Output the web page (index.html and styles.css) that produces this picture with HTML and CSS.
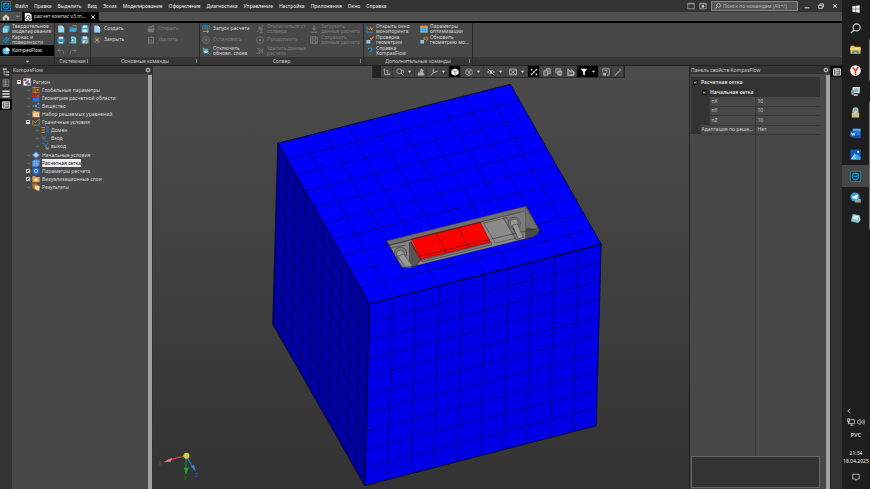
FILE: index.html
```html
<!DOCTYPE html>
<html lang="ru">
<head>
<meta charset="utf-8">
<title>KompasFlow</title>
<link rel="stylesheet" href="styles.css">
</head>
<body>
<svg class="sprite" aria-hidden="true">
  <defs>
    <path id="grid" d="M0 0H10M0 1H10M0 2H10M0 3H10M0 4H10M0 5H10M0 6H10M0 7H10M0 8H10M0 9H10M0 10H10M0 0V10M1 0V10M2 0V10M3 0V10M4 0V10M5 0V10M6 0V10M7 0V10M8 0V10M9 0V10M10 0V10" vector-effect="non-scaling-stroke"/>
    <symbol id="kompas" viewBox="0 0 12 12"><rect x=".5" y=".5" width="11" height="11" fill="#0b3346" stroke="#1e7fae"/><circle cx="6" cy="6" r="3.6" fill="none" stroke="#2a9bd0"/><path d="M2 3h8M3.500 6h5M4 8.500q2 1.500 4 0M4.500 4v2M7.500 4v2" fill="none" stroke="#2a9bd0" stroke-width=".9"/></symbol>
    <symbol id="home" viewBox="0 0 10 10"><path d="M1 5.300 5 1.500l4 3.800v3.700H6.200V6H4v3H1z" fill="#cfcfcf"/></symbol>
    <symbol id="down" viewBox="0 0 10 10"><path d="M1.500 3.500h7L5 7.500z" fill="currentColor"/></symbol>
    <symbol id="part" viewBox="0 0 10 10"><path d="M1 0h6l2.500 2.500V10H1z" fill="#f4f4f4"/><path d="M7.500 4A3 3 0 1 0 8 7.500L5.500 6z" fill="none" stroke="#222" stroke-width="1.100"/></symbol>
    <symbol id="solid" viewBox="0 0 10 10"><path d="M1 4 3.500 1H9.500V6.500L7 9.500H1z" fill="#3c9fce"/><path d="M1 4h6v5.500H1z" fill="#8fd0ee"/><path d="M1 4 3.500 1H9.500L7 4z" fill="#61b8df"/></symbol>
    <symbol id="surf" viewBox="0 0 10 10"><path d="M.5 6 6 .8l3.700 3L5 9.500z" fill="#2484bb"/><path d="M3 4l4 3.500M2 7.500 8 2.500" stroke="#0e486b" stroke-width=".8"/></symbol>
    <symbol id="flow" viewBox="0 0 10 10"><circle cx="5" cy="5" r="4.500" fill="#4fb0dd"/><path d="M5 .5A4.500 4.500 0 0 1 9.500 5L5 5z" fill="#e6f6ff"/><path d="M2 2.500Q4 6 8 8" stroke="#bce6fb" fill="none"/></symbol>
    <symbol id="new" viewBox="0 0 10 10"><path d="M1.500 .5H6L9 3.500V9.500H1.500z" fill="#9bd6ef"/><path d="M6 .5V3.500H9z" fill="#e6f6ff"/></symbol>
    <symbol id="open" viewBox="0 0 10 10"><path d="M.5 2H4L5 3H9.500V8.500H.5z" fill="#2384ba"/><path d="M4 .8h5v1.500" fill="none" stroke="#e48a29"/><path d="M2 4.500H10L8.500 8.500H.5z" fill="#3ba4d8"/></symbol>
    <symbol id="save" viewBox="0 0 10 10"><path d="M.5 .5H8L9.500 2V9.500H.5z" fill="#3ba4d8"/><path d="M2.500 .5H7.500V3.500H2.500zM2 5.500H8V9H2z" fill="#d3eef9"/></symbol>
    <symbol id="print" viewBox="0 0 10 10"><path d="M2 .8H8V4H2zM2 7H8V9.500H2z" fill="#d3eef9"/><path d="M.5 3.500H9.500V7.500H.5z" fill="#2b92c8"/></symbol>
    <symbol id="preview" viewBox="0 0 10 10"><path d="M2.500 .5H7L9 2.500V9.500H2.500z" fill="#71c4e8"/><circle cx="4.500" cy="5.500" r="2" fill="#e6f6ff" stroke="#17628d"/><path d="M3 7 .8 9.300" stroke="#3ba4d8" stroke-width="1.300"/></symbol>
    <symbol id="saveas" viewBox="0 0 10 10"><use href="#save"/><path d="M4.500 9 9 4.500" stroke="#e48a29" stroke-width="1.800"/></symbol>
    <symbol id="undo" viewBox="0 0 10 10"><path d="M3.800 2 1 4.500 3.800 7M1 4.500H7Q9 5 8 8.500" fill="none" stroke="#777"/></symbol>
    <symbol id="redo" viewBox="0 0 10 10"><path d="M6.200 2 9 4.500 6.200 7M9 4.500H3Q1 5 2 8.500" fill="none" stroke="#777"/></symbol>
    <symbol id="close" viewBox="0 0 10 10"><circle cx="5" cy="5" r="4.200" fill="none" stroke="#3585ad" stroke-width=".8"/><path d="M3 3l4 4M7 3 3 7" stroke="#f0902c" stroke-width="1.500"/></symbol>
    <symbol id="folderg" viewBox="0 0 10 10"><path d="M.5 4.500H9.500L8.500 9H1.500zM2 4V2H7" fill="#777"/><path d="M4 3.500 8 .8M6 .8H8V3" fill="none" stroke="#888"/></symbol>
    <symbol id="trash" viewBox="0 0 10 10"><path d="M1 2H9M4 1H6M2 3V9H8V3M4 4V8M6 4V8" fill="none" stroke="#787878" stroke-width="1.200"/></symbol>
    <symbol id="run" viewBox="0 0 10 10"><path d="M.5 1H5V5H.5zM5 1H9.500V5H5zM2.500 1V5M7 1V5" fill="none" stroke="#2d8dc4" stroke-width=".9"/><path d="M1 8H8M6 6l2.500 2L6 9.800" fill="none" stroke="#e48a29" stroke-width="1.200"/></symbol>
    <symbol id="pause" viewBox="0 0 10 10"><circle cx="5" cy="5" r="4.300" fill="none" stroke="#7b7b7b" stroke-width=".9"/><path d="M4 3V7M6 3V7" stroke="#888"/></symbol>
    <symbol id="play" viewBox="0 0 10 10"><circle cx="5" cy="5" r="4.300" fill="none" stroke="#7b7b7b" stroke-width=".9"/><path d="M4 3v4l3-2z" fill="#888"/></symbol>
    <symbol id="layers" viewBox="0 0 10 10"><path d="M.5 2H8V8H2z" fill="#3398cf"/><path d="M2 6q3-4 6 0-3 3-6 0" fill="#d3eef9"/><path d="M1 1l8.500 8.500" stroke="#e48a29"/></symbol>
    <symbol id="plug" viewBox="0 0 10 10"><path d="M.5 9 3 6.500M3 4 6 7 8.500 5.500 5 2zM6 3 9 .5M4 9H9" stroke="#808080" fill="#6d6d6d"/></symbol>
    <symbol id="wipe" viewBox="0 0 10 10"><path d="M1 2H4V8H1M9 2 4 8M5 2 9 8M6 5H9" fill="none" stroke="#7b7b7b"/></symbol>
    <symbol id="load" viewBox="0 0 10 10"><path d="M5 .5V6M2.500 4 5 6.500 7.500 4M1 9H9" fill="none" stroke="#808080" stroke-width="1.200"/></symbol>
    <symbol id="store" viewBox="0 0 10 10"><path d="M1 1H8L9 2V9H1zM3 1V4H7V1M3 9V6H7V9" fill="none" stroke="#858585"/></symbol>
    <symbol id="chart" viewBox="0 0 10 10"><path d="M1 1V9H9" fill="none" stroke="#2d8dc4" stroke-width="1.200"/><path d="M2 4 4 6 6 3 7 6 9 3" fill="none" stroke="#e48a29" stroke-width="1.200"/></symbol>
    <symbol id="check" viewBox="0 0 10 10"><path d="M.5 5H5.500V9.500H.5z" fill="#7ecbea"/><path d="M5 2.500 6.500 4.500 9.500 .8" fill="none" stroke="#e48a29" stroke-width="1.300"/></symbol>
    <symbol id="help" viewBox="0 0 10 10"><path d="M3 3Q3 1 5 1T7.500 3Q7.500 4.500 5 5.500V7M5 8.300V9.800" fill="none" stroke="#2d93cb" stroke-width="1.400"/></symbol>
    <symbol id="table" viewBox="0 0 10 10"><path d="M.5 1H9.500V9.500H.5z" fill="#9bd6ef"/><path d="M.5 1H9.500V3H.5z" fill="#e48a29"/><path d="M.5 5H9.500M.5 7.200H9.500M3.500 3V9.500M6.500 3V9.500" stroke="#1f7eb2" stroke-width=".8"/></symbol>
    <symbol id="refresh" viewBox="0 0 10 10"><path d="M.5 5H5V9.500H.5z" fill="#7ecbea"/><path d="M4 3 6 1.500V5zM7 1Q9 2.500 7 5M8.500 .5Q10.500 3 8.500 6" fill="none" stroke="#d9812c"/></symbol>
    <symbol id="gear" viewBox="0 0 10 10"><circle cx="5" cy="5" r="2.700" fill="none" stroke="#ddd" stroke-width="1.400"/><path d="M5 .8V2M5 8V9.200M.8 5H2M8 5H9.200M2 2l.8.8M8 2l-.8.8M2 8l.8-.8M8 8l-.8-.8" stroke="#ddd" stroke-width="1.200"/></symbol>
    <symbol id="tree" viewBox="0 0 10 10"><path d="M1 1H5M2.500 2V8.500H5M2.500 5H5" fill="none" stroke="#aaa"/><path d="M5 4H9V6H5zM5 7.500H9V9.500H5zM1 .5H6V2.500H1z" fill="#aaa"/></symbol>
    <symbol id="sheet" viewBox="0 0 10 10"><path d="M1.500 1H8.500V9H1.500zM3 3H7M3 5H7M3 7H7M4 1V9" fill="none" stroke="#999"/></symbol>
    <symbol id="lines" viewBox="0 0 10 10"><path d="M.5 1.500H9.500M.5 5H9.500M.5 8.500H9.500" stroke="#ddd" stroke-width="1.900"/></symbol>
    <symbol id="panel" viewBox="0 0 10 10"><path d="M.7 1H9.300V9H.7z" fill="#555" stroke="#eee" stroke-width="1.100"/><path d="M3.500 1V9M4 3.500H8M4 6H8" stroke="#eee" stroke-width="1.100"/></symbol>
    <symbol id="region" viewBox="0 0 10 10"><path d="M.5 .5H9.500V9.500H.5z" fill="#f4f4ff"/><path d="M1 1H4.500V4H1zM5.500 6H9V9H5.500z" fill="#e44"/><path d="M2 6.500 7 2V9z" fill="#347ad8"/></symbol>
    <symbol id="params" viewBox="0 0 10 10"><path d="M.5 2H9.500M.5 5H9.500M.5 8H9.500M3 .8V3.200M7 3.800V6.200M4 6.800V9.200" stroke="#d8872d" stroke-width="1.100"/></symbol>
    <symbol id="geom" viewBox="0 0 10 10"><path d="M1 5H9V9.500H1z" fill="#1679f0"/><path d="M1 .5H5.500V4.500H1z" fill="#e31818"/><circle cx="7.500" cy="2.800" r="1.800" fill="#db3a3a"/></symbol>
    <symbol id="matter" viewBox="0 0 10 10"><path d="M5 5 8 2M5 5 1 5M5 5 8 8" stroke="#3f82c0"/><g fill="#4aa2df"><circle cx="5" cy="5" r="1.500"/><circle cx="8" cy="2" r="1.200"/><circle cx="1.500" cy="5" r="1"/><circle cx="5" cy="9" r="1"/><circle cx="8.500" cy="6.500" r="1"/></g></symbol>
    <symbol id="eq" viewBox="0 0 10 10"><path d="M.5 1H4L5 2H9.500V9H.5z" fill="#eea453"/><path d="M2 4H8.500V8H2z" fill="#fff"/><path d="M3 6H8M4 4.500V7.500M7 4.500V7.500" stroke="#e3964a"/></symbol>
    <symbol id="bound" viewBox="0 0 10 10"><path d="M1 9V3L4 6 9 1V9z" fill="none" stroke="#d8872d"/><path d="M1 9.300H9M9.200 1V9" stroke="#3574c4"/></symbol>
    <symbol id="domain" viewBox="0 0 10 10"><path d="M.5 2H5M.5 5H5M.5 8H5" stroke="#e08a2a" stroke-width="1.300"/><path d="M7 .5V9.500M9 .5V9.500M6 2H10M6 5H10M6 8H10" stroke="#2f6bc0"/></symbol>
    <symbol id="inlet" viewBox="0 0 10 10"><path d="M1 1 5 9H9.500M3 4.500 8 2" fill="none" stroke="#3574c4" stroke-width="1.100"/><path d="M1 5 6 6" stroke="#a26a30"/></symbol>
    <symbol id="outlet" viewBox="0 0 10 10"><path d="M1 1Q7 2 6 9M9 1 6 5" fill="none" stroke="#3574c4" stroke-width="1.200"/><path d="M6 6 9 9M9 6V9H6" fill="none" stroke="#e08a2a"/></symbol>
    <symbol id="initial" viewBox="0 0 10 10"><path d="M5 1 9.500 5 5 9 .5 5z" fill="#a9cdf5" stroke="#3c7ed5"/></symbol>
    <symbol id="mesh" viewBox="0 0 10 10"><path d="M.5 3 3 .5H9.500V7L7 9.500H.5z" fill="#3d83e4"/><path d="M.5 5.500H9M3 1V9.500M6 1V9.500M.5 8H9M.5 3H9.500" stroke="#9cc5fa" stroke-width=".7"/></symbol>
    <symbol id="calc" viewBox="0 0 10 10"><path d="M5 0 7 1.500 9.500 2 9 5 9.500 8 7 8.500 5 10 3 8.500 .5 8 1 5 .5 2 3 1.500z" fill="#1c71e6"/><circle cx="5" cy="5" r="2" fill="none" stroke="#c6defc"/></symbol>
    <symbol id="visual" viewBox="0 0 10 10"><path d="M.5 1.500H4L5 2.500H9.500V9H.5z" fill="#eda65b"/><path d="M2 8 4 4H8L6 8z" fill="#fff2dd" stroke="#c57f31" stroke-width=".6"/></symbol>
    <symbol id="result" viewBox="0 0 10 10"><path d="M.5 .5H6V6.500H.5zM2 2H8V8H2z" fill="#b87333"/><path d="M3.500 3.500H9.500V9.500H6L3.500 7z" fill="#f5d2a0"/></symbol>
    <symbol id="axes" viewBox="0 0 10 10"><path d="M2 1V8H9M2 1 .8 3M9 8 7 6.800M4 3H6V8" fill="none" stroke="#bbb"/></symbol>
    <symbol id="lens" viewBox="0 0 10 10"><circle cx="4" cy="4" r="3" fill="none" stroke="#aaa"/><path d="M6 6 9.500 9.500M6 3H9.500V6" stroke="#aaa" fill="none"/></symbol>
    <symbol id="orient" viewBox="0 0 10 10"><path d="M1 9H9L8 6H2zM4 6 5 1 8 3 6 6" fill="#aaa" stroke="#ccc" stroke-width=".6"/></symbol>
    <symbol id="triad" viewBox="0 0 10 10"><path d="M4 .8V6L1 9.500M4 6 9.500 4" fill="none" stroke="#bbb" stroke-width="1.200"/></symbol>
    <symbol id="cube" viewBox="0 0 10 10"><path d="M5 .5 9.500 2.500V7.500L5 9.800 .5 7.500V2.500z" fill="#f5f5f5"/><path d="M.8 2.700 5 4.700 9.200 2.700M5 4.700V9.500" stroke="#444" stroke-width=".6" fill="none"/></symbol>
    <symbol id="wire" viewBox="0 0 10 10"><path d="M5 .8 9 2.800V7.500L5 9.500 1 7.500V2.800zM1 2.800 5 5 9 2.800M5 5V9.500M3 1.800 7 8.500M7 1.800 3 8.500" fill="none" stroke="#aaa" stroke-width=".8"/></symbol>
    <symbol id="eye" viewBox="0 0 10 10"><path d="M.5 5Q5 .8 9.500 5 5 9.200 .5 5" fill="none" stroke="#aaa"/><circle cx="5" cy="5" r="1.400" fill="#ccc"/><path d="M1 1l8 8" stroke="#ccc"/></symbol>
    <symbol id="crop" viewBox="0 0 10 10"><path d="M.8 1.500H9.200V8.500H.8zM1 2l8 6.500M9 2 1 8.500" fill="none" stroke="#bbb"/></symbol>
    <symbol id="dots" viewBox="0 0 10 10"><path d="M2.500 7.500 7.500 2.500" stroke="#eee"/><path d="M1 1H3V3H1zM7 1H9V3H7zM1 7H3V9H1zM7 7H9V9H7zM4 4H6V6H4z" fill="#eee"/></symbol>
    <symbol id="box" viewBox="0 0 10 10"><path d="M1 3.500H6V9H1zM4 3.500V1H9V7H6" fill="#666" stroke="#bbb"/></symbol>
    <symbol id="stack" viewBox="0 0 10 10"><path d="M1 1H7V6H1z" fill="#666" stroke="#bbb" stroke-width=".8"/><path d="M3.500 4.500Q6 3 8.500 4.500V8.500Q6 10 3.500 8.500z" fill="#999" stroke="#ccc" stroke-width=".8"/><path d="M3.500 6.500H8.500" stroke="#444" stroke-width=".7"/></symbol>
    <symbol id="bag" viewBox="0 0 10 10"><path d="M1 9.500V1L4 4 6 2 8 5V9.500zM3 8H9V5H3" fill="#777" stroke="#bbb"/></symbol>
    <symbol id="list" viewBox="0 0 10 10"><path d="M1 1H9V9H6M1 1V5M3 3H7M5 5H7" fill="none" stroke="#aaa" stroke-width="1.100"/><path d="M1 6H5V9.500H1z" fill="#aaa"/></symbol>
    <symbol id="filter" viewBox="0 0 10 10"><path d="M.8 1H9.200L6 5V9.500L4 8.500V5z" fill="#fff"/></symbol>
    <symbol id="pick" viewBox="0 0 10 10"><path d="M1 9.500 7 3.500" stroke="#999" stroke-width="1.500"/><path d="M6 2 8 .8 9.500 2.500 8 4.500z" fill="#888"/></symbol>
    <symbol id="search" viewBox="0 0 10 10"><circle cx="6" cy="4" r="3.200" fill="none" stroke="currentColor" stroke-width="1.100"/><path d="M3.700 6.300.8 9.200" stroke="currentColor" stroke-width="1.200"/></symbol>
    <symbol id="win" viewBox="0 0 10 10"><path d="M.5 1.500 4.500 1V4.700H.5zM5.200 .9 9.500 .3V4.700H5.200zM.5 5.400H4.500V9L.5 8.500zM5.200 5.400H9.500V9.700L5.200 9.100z" fill="#fff"/></symbol>
    <symbol id="explorer" viewBox="0 0 12 12"><path d="M.5 2H4.500L5.500 3H11.500V10.500H.5z" fill="#f3b83a"/><path d="M.5 4H11.500V7H.5z" fill="#ffda6a"/><path d="M2.500 10.500V7H9.500V10.500H7.500V8.800H4.500V10.500z" fill="#2c93df"/></symbol>
    <symbol id="yandex" viewBox="0 0 12 12"><circle cx="6" cy="6" r="5.800" fill="#fff"/><path d="M3 2.500 6 6.500 9 2.500M6 6.500V11" fill="none" stroke="#ee3224" stroke-width="1.800"/></symbol>
    <symbol id="monitor" viewBox="0 0 12 12"><path d="M3 1H11L10.500 8H2z" fill="#d8e2e8"/><path d="M4.500 2.500H9.500L9 6.500H4z" fill="#9cc2d5"/><path d="M1 5 4 4 5 9 2 10z" fill="#8f989c"/><path d="M4 9H9L8 11H4z" fill="#b9c0c4"/><path d="M5 5 7 4 8 5.500" fill="none" stroke="#4a94b4"/></symbol>
    <symbol id="lock" viewBox="0 0 12 12"><path d="M3.500 6V3Q4 1 6 1T8.500 3V6" fill="#8ea9b5" stroke="#b6cbd6" stroke-width="1.500"/><path d="M2 6H10V11.500H2z" fill="#d8bb72"/><path d="M4 5 7 4 8 8 5 9z" fill="#acd0df"/></symbol>
    <symbol id="word" viewBox="0 0 12 12"><path d="M3 .8H11.500V11H3z" fill="#2a79d1"/><path d="M3 .8H11.500V3.500H3z" fill="#50a9ec"/><path d="M3 8H11.500V11H3z" fill="#174fa5"/><path d="M0 3.500H7V9.500H0z" fill="#185abd"/><path d="M1.500 5 2.500 8 3.500 5.500 4.500 8 5.500 5" fill="none" stroke="#fff" stroke-width=".9"/></symbol>
    <symbol id="photos" viewBox="0 0 12 12"><path d="M.5 .5H11.500V11.500H.5z" fill="#0f5db8"/><path d="M.5 11.500 5 5 11.500 11.500z" fill="#8bd2ff"/><path d="M5 8.500 8 5.500 11.500 9V11.500H8z" fill="#3ba0ed"/><path d="M8 2H10V4H8z" fill="#fff"/></symbol>
    <symbol id="tg" viewBox="0 0 12 12"><circle cx="5.500" cy="5.500" r="5" fill="#2fa4df"/><path d="M2 5.500 9 2.500 7.500 8.500 5 6.500 4.500 8z" fill="#fff"/><path d="M5.500 7.500H11.800V11.500H5.500z" fill="#9aa1a6"/></symbol>
    <symbol id="note" viewBox="0 0 12 12"><path d="M3 1 10.500 2.500 8.500 11 1 9z" fill="#83c8d6"/><path d="M4 2.500 9.500 3.500 8.500 7 3 6z" fill="#d9f1f5"/><path d="M8.500 11 10.500 2.500 11.300 8z" fill="#dfe9e9"/></symbol>
    <symbol id="net" viewBox="0 0 10 10"><path d="M2.500 2H9.500V7H2.500zM4 9H8M6 7V9M.5 1V4.500H3V1zM1.800 4.500V8" fill="none" stroke="#ddd" stroke-width=".9"/></symbol>
    <symbol id="sound" viewBox="0 0 10 10"><path d="M.5 3.500H2L4 1.500V8.500L2 6.500H.5zM5.500 3.500Q6.800 5 5.500 6.500M7 2.500Q9 5 7 7.500M8.500 1.500Q11 5 8.500 8.500" fill="none" stroke="#ddd" stroke-width=".8"/></symbol>
    <symbol id="bubble" viewBox="0 0 10 10"><path d="M1 1.500H9V7.500H6.500L5 9.200 4.500 7.500H1z" fill="none" stroke="#ddd" stroke-width=".9"/></symbol>
    <symbol id="frame" viewBox="0 0 10 10"><path d="M1 1.500H9V8.500H1z" fill="none" stroke="#aaa"/><path d="M1 2.500H9" stroke="#aaa" stroke-width=".8"/></symbol>
    <symbol id="frameg" viewBox="0 0 10 10"><use href="#frame"/><circle cx="5" cy="5.500" r="1.700" fill="#ccc"/></symbol>
    <symbol id="min" viewBox="0 0 10 10"><path d="M1 8H9" stroke="#eee" stroke-width="1.500"/></symbol>
    <symbol id="restore" viewBox="0 0 10 10"><path d="M1 4H7V9H1zM3 3V1.500H9V7H8" fill="none" stroke="#eee" stroke-width="1.300"/></symbol>
    <symbol id="x" viewBox="0 0 10 10"><path d="M2 2l6 6M8 2 2 8" stroke="#eee" stroke-width="1.500"/></symbol>
  </defs>
</svg>

<div class="screen">
  <main class="app">
    <header class="menubar">
      <svg class="logo"><use href="#kompas"/></svg>
      <nav class="menu">
        <button>Файл</button><button>Правка</button><button>Выделить</button><button>Вид</button><button>Эскиз</button><button>Моделирование</button><button>Оформление</button><button>Диагностика</button><button>Управление</button><button>Настройка</button><button>Приложения</button><button>Окно</button><button>Справка</button>
      </nav>
      <div class="window-tools">
        <button aria-label="Экран"><svg class="icon"><use href="#frame"/></svg></button>
        <button aria-label="Вид окна"><svg class="icon"><use href="#frameg"/></svg></button>
        <label class="search"><svg class="icon small"><use href="#search"/></svg><input type="text" placeholder="Поиск по командам (Alt+/)" aria-label="Поиск по командам"></label>
      </div>
      <div class="window-buttons">
        <button aria-label="Свернуть"><svg class="icon small"><use href="#min"/></svg></button>
        <button aria-label="Восстановить"><svg class="icon small"><use href="#restore"/></svg></button>
        <button aria-label="Закрыть окно"><svg class="icon small"><use href="#x"/></svg></button>
      </div>
    </header>

    <div class="tabs">
      <button class="home" aria-label="Главная"><svg class="icon"><use href="#home"/></svg></button>
      <button class="home-menu" aria-label="Список"><svg class="icon tiny"><use href="#down"/></svg></button>
      <button class="tab"><svg class="icon"><use href="#part"/></svg><span>расчет компас v3.m...</span><svg class="icon small"><use href="#x"/></svg></button>
    </div>

    <section class="ribbon">
      <div class="group modes">
        <div class="mode-list">
          <button class="cmd"><svg class="icon"><use href="#solid"/></svg><span>Твердотельное<br>моделирование</span></button>
          <button class="cmd"><svg class="icon"><use href="#surf"/></svg><span>Каркас и<br>поверхности</span></button>
          <button class="cmd active"><svg class="icon"><use href="#flow"/></svg><span>KompasFlow</span></button>
        </div>
        <div class="caption"><svg class="icon tiny"><use href="#down"/></svg></div>
      </div>
      <div class="group system">
        <div class="icon-grid">
          <button aria-label="Создать документ"><svg class="icon"><use href="#new"/></svg></button><button aria-label="Открыть документ"><svg class="icon"><use href="#open"/></svg></button><button aria-label="Сохранить"><svg class="icon"><use href="#save"/></svg></button>
          <button aria-label="Печать"><svg class="icon"><use href="#print"/></svg></button><button aria-label="Просмотр"><svg class="icon"><use href="#preview"/></svg></button><button aria-label="Сохранить как"><svg class="icon"><use href="#saveas"/></svg></button>
          <button aria-label="Отменить"><svg class="icon"><use href="#undo"/></svg></button><button aria-label="Повторить"><svg class="icon"><use href="#redo"/></svg></button>
        </div>
        <div class="caption grip">Системная</div>
      </div>
      <div class="group basic">
        <div class="commands">
          <button class="cmd"><svg class="icon"><use href="#new"/></svg><span>Создать</span></button>
          <button class="cmd off"><svg class="icon"><use href="#folderg"/></svg><span>Открыть</span></button>
          <button class="cmd"><svg class="icon"><use href="#close"/></svg><span>Закрыть</span></button>
          <button class="cmd off"><svg class="icon"><use href="#trash"/></svg><span>Удалить</span></button>
        </div>
        <div class="caption grip">Основные команды</div>
      </div>
      <div class="group solver">
        <div class="commands">
          <button class="cmd"><svg class="icon"><use href="#run"/></svg><span>Запуск расчета</span></button>
          <button class="cmd off"><svg class="icon"><use href="#plug"/></svg><span>Отключиться от<br>солвера</span></button>
          <button class="cmd off"><svg class="icon"><use href="#load"/></svg><span>Загрузить<br>данные расчета</span></button>
          <button class="cmd off"><svg class="icon"><use href="#pause"/></svg><span>Остановить</span></button>
          <button class="cmd off"><svg class="icon"><use href="#play"/></svg><span>Продолжить</span></button>
          <button class="cmd off"><svg class="icon"><use href="#store"/></svg><span>Сохранить<br>данные расчета</span></button>
          <button class="cmd"><svg class="icon"><use href="#layers"/></svg><span>Отключить<br>обновл. слоев</span></button>
          <button class="cmd off"><svg class="icon"><use href="#wipe"/></svg><span>Удалить данные<br>расчета</span></button>
        </div>
        <div class="caption grip">Солвер</div>
      </div>
      <div class="group extra">
        <div class="commands">
          <button class="cmd"><svg class="icon"><use href="#chart"/></svg><span>Открыть окно<br>мониторинга</span></button>
          <button class="cmd"><svg class="icon"><use href="#table"/></svg><span>Параметры<br>оптимизации</span></button>
          <button class="cmd"><svg class="icon"><use href="#check"/></svg><span>Проверка<br>геометрии</span></button>
          <button class="cmd"><svg class="icon"><use href="#refresh"/></svg><span>Обновить<br>геометрию мо...</span></button>
          <button class="cmd"><svg class="icon"><use href="#help"/></svg><span>Справка<br>KompasFlow</span></button>
        </div>
        <div class="caption grip">Дополнительные команды</div>
      </div>
      <div class="group rest"><div></div><div class="caption"></div></div>
    </section>

    <section class="workspace">
      <div class="strip left">
        <button aria-label="Дерево"><svg class="icon"><use href="#tree"/></svg></button>
        <button aria-label="Исполнения"><svg class="icon"><use href="#sheet"/></svg></button>
        <button aria-label="Слои"><svg class="icon"><use href="#lines"/></svg></button>
        <button class="active" aria-label="KompasFlow"><svg class="icon"><use href="#panel"/></svg></button>
      </div>
      <aside class="panel tree-panel">
        <h2 class="panel-title">KompasFlow<svg class="icon small"><use href="#gear"/></svg></h2>
        <div class="panel-body">
          <ul class="tree">
            <li><button class="node"><i class="box minus"></i><svg class="icon"><use href="#region"/></svg><span>Регион</span></button>
              <ul>
                <li><button class="node"><i class="box none"></i><svg class="icon"><use href="#params"/></svg><span>Глобальные параметры</span></button></li>
                <li><button class="node"><i class="box none"></i><svg class="icon"><use href="#geom"/></svg><span>Геометрия расчетной области</span></button></li>
                <li><button class="node"><i class="box none"></i><svg class="icon"><use href="#matter"/></svg><span>Вещество</span></button></li>
                <li><button class="node"><i class="box none"></i><svg class="icon"><use href="#eq"/></svg><span>Набор решаемых уравнений</span></button></li>
                <li><button class="node"><i class="box minus"></i><svg class="icon"><use href="#bound"/></svg><span>Граничные условия</span></button>
                  <ul>
                    <li><button class="node"><i class="box none"></i><svg class="icon"><use href="#domain"/></svg><span>Домен</span></button></li>
                    <li><button class="node"><i class="box none"></i><svg class="icon"><use href="#inlet"/></svg><span>Вход</span></button></li>
                    <li><button class="node"><i class="box none"></i><svg class="icon"><use href="#outlet"/></svg><span>выход</span></button></li>
                  </ul>
                </li>
                <li><button class="node"><i class="box none"></i><svg class="icon"><use href="#initial"/></svg><span>Начальные условия</span></button></li>
                <li><button class="node selected"><i class="box none"></i><svg class="icon"><use href="#mesh"/></svg><span>Расчетная сетка</span></button></li>
                <li><button class="node"><i class="box plus"></i><svg class="icon"><use href="#calc"/></svg><span>Параметры расчета</span></button></li>
                <li><button class="node"><i class="box plus"></i><svg class="icon"><use href="#visual"/></svg><span>Визуализационные слои</span></button></li>
                <li><button class="node"><i class="box none"></i><svg class="icon"><use href="#result"/></svg><span>Результаты</span></button></li>
              </ul>
            </li>
          </ul>
          <div class="scrollbar"></div>
        </div>
      </aside>

      <div class="viewport">
        <svg class="scene" viewBox="153 66 537 423" role="img" aria-label="Расчетная область">
          <g stroke="#000" stroke-width=".5">
            <path d="M278 143 511 84 602 244 370 304z" fill="#0000fe"/>
            <path d="M370 304 602 244 597 426 365 486z" fill="#0000e6"/>
            <path d="M278 143 370 304 365 486 273 324z" fill="#0000a0"/>
          </g>
          <g fill="none" stroke="#000040" stroke-width=".5">
            <use href="#grid" transform="matrix(23.3 -5.9 9.15 16.1 278 143)"/>
            <use href="#grid" transform="matrix(23.2 -6 -.5 18.2 370 304)"/>
            <use href="#grid" transform="matrix(9.2 16.1 -.5 18.15 278 143)"/>
          </g>
          <g stroke-width=".5" stroke="#333">
            <path d="M387 241 527 206 540 230 538 234 533 237 418 265 410 268 402 267z" fill="#838383"/>
            <path d="M387 241 527 206 528 211 412 239 405 242 390 245z" fill="#707070"/>
            <path d="M410 242 421 259 422 264 410 267z" fill="#555"/>
            <path d="M526 206 540 230 538 234 533 237 526 238z" fill="#6e6e6e"/>
            <path d="M527 228 540 230 538 234 533 237 526 238z" fill="#4c4c4c"/>
            <path d="M412 239 482 222 517 213 526 238 418 265 422 260z" fill="#8e8e8e" stroke="none"/>
            <path d="M507 216 526 209 526 238 520 239z" fill="#7c7c7c" stroke="none"/>
            <path d="M484 223 505 218 517 238 496 243z" fill="#8a8a8a"/>
            <path d="M504 218 507 217 520 239 517 240z" fill="#777"/>
            <path d="M422 260 492 242 492 245 423 262z" fill="#777"/>
            <path d="M412 239 481 222 491 242 422 259z" fill="#f00" stroke="#600"/>
            <path d="M411 240 422 259 422 262 411 243z" fill="#b00" stroke="none"/>
            <path d="M437 234 447 253M459 228 469 247M421 256 491 239M390 248 406 245M390 245 525 211M492 239 539 228M387 241 402 267" fill="none" stroke="#222"/>
            <circle cx="401" cy="253" r="6" fill="#797979"/><circle cx="401" cy="254" r="4" fill="#999"/>
            <path d="M398 256 404 254 413 266 406 267z" fill="#999"/>
            <circle cx="515" cy="223" r="6" fill="#777"/><circle cx="515" cy="223" r="4" fill="#999"/>
            <path d="M513 225 518 224 524 237 519 239z" fill="#999"/>
          </g>
          <g fill="none" stroke-width="1.200">
            <path d="M186 456 167 461" stroke="#c8474a"/><path d="M172 458 164 462 171 462z" fill="#f08080"/>
            <path d="M186 456V469" stroke="#15962b"/><path d="M184 468H189L186 475z" fill="#17a92f"/>
            <path d="M186 456 193 468" stroke="#287bbb"/><path d="M191 467 194 465 196 472z" fill="#3683eb"/>
            <circle cx="186.500" cy="456" r="3" fill="#d1ca45"/>
          </g>
          <text class="axis ax" x="158" y="465">X</text><text class="axis ay" x="184" y="480">Y</text><text class="axis az" x="195" y="477">Z</text>
        </svg>
        <div class="viewbar">
          <span class="handle"></span>
          <button aria-label="СК"><svg class="icon"><use href="#axes"/></svg></button>
          <button class="wide" aria-label="Масштаб"><svg class="icon"><use href="#lens"/></svg><svg class="icon tiny"><use href="#down"/></svg></button>
          <button aria-label="Ориентация"><svg class="icon"><use href="#orient"/></svg></button>
          <button class="wide" aria-label="Оси"><svg class="icon"><use href="#triad"/></svg><svg class="icon tiny"><use href="#down"/></svg></button>
          <button class="active" aria-label="Полутоновое"><svg class="icon"><use href="#cube"/></svg></button>
          <button class="wide" aria-label="Каркас"><svg class="icon"><use href="#wire"/></svg><svg class="icon tiny"><use href="#down"/></svg></button>
          <button class="wide" aria-label="Скрыть"><svg class="icon"><use href="#eye"/></svg><svg class="icon tiny"><use href="#down"/></svg></button>
          <button class="wide" aria-label="Сечение"><svg class="icon"><use href="#crop"/></svg><svg class="icon tiny"><use href="#down"/></svg></button>
          <button class="active" aria-label="Привязки"><svg class="icon"><use href="#dots"/></svg></button>
          <button aria-label="Объект"><svg class="icon"><use href="#box"/></svg></button>
          <button aria-label="Набор"><svg class="icon"><use href="#stack"/></svg></button>
          <button aria-label="Свойства"><svg class="icon"><use href="#bag"/></svg></button>
          <button class="active wide" aria-label="Фильтр"><svg class="icon"><use href="#filter"/></svg><svg class="icon tiny"><use href="#down"/></svg></button>
          <button aria-label="Копия"><svg class="icon"><use href="#list"/></svg></button>
          <button aria-label="Пипетка"><svg class="icon"><use href="#pick"/></svg></button>
        </div>
      </div>

      <aside class="panel prop-panel">
        <h2 class="panel-title">Панель свойств KompasFlow<svg class="icon small"><use href="#gear"/></svg></h2>
        <div class="panel-body">
          <div class="props">
            <table class="prop-table">
              <colgroup><col class="gutter"><col class="gutter"><col class="name"><col></colgroup>
              <tbody>
                <tr class="tall"><th><i class="box minus dark"></i></th><th colspan="3">Расчетная сетка</th></tr>
                <tr class="tall"><th></th><th><i class="box minus dark"></i></th><th colspan="2">Начальная сетка</th></tr>
                <tr><th></th><th></th><td>nX</td><td>10</td></tr>
                <tr><th></th><th></th><td>nY</td><td>10</td></tr>
                <tr class="tall"><th></th><th></th><td>nZ</td><td>10</td></tr>
                <tr><th></th><td class="long" colspan="2">Адаптация по реше...</td><td>Нет</td></tr>
              </tbody>
            </table>
            <div class="blank"></div>
            <div class="hint"></div>
          </div>
          <div class="scrollbar"></div>
        </div>
      </aside>
      <div class="strip right">
        <button class="active" aria-label="Панель свойств"><svg class="icon"><use href="#panel"/></svg></button>
      </div>
    </section>
  </main>

  <nav class="taskbar">
    <button class="start" aria-label="Пуск"><svg class="icon"><use href="#win"/></svg></button>
    <button class="find" aria-label="Поиск"><svg class="icon large"><use href="#search"/></svg></button>
    <button class="open" aria-label="Проводник"><svg class="icon large"><use href="#explorer"/></svg></button>
    <button class="open" aria-label="Яндекс"><svg class="icon large"><use href="#yandex"/></svg></button>
    <button aria-label="Компьютер"><svg class="icon large"><use href="#monitor"/></svg></button>
    <button class="open" aria-label="Защита"><svg class="icon large"><use href="#lock"/></svg></button>
    <button class="open" aria-label="Word"><svg class="icon large"><use href="#word"/></svg></button>
    <button class="open" aria-label="Фотографии"><svg class="icon large"><use href="#photos"/></svg></button>
    <button class="open current" aria-label="Компас"><svg class="icon large"><use href="#kompas"/></svg></button>
    <button class="open" aria-label="Telegram"><svg class="icon large"><use href="#tg"/></svg></button>
    <button class="open" aria-label="Блокнот"><svg class="icon large"><use href="#note"/></svg></button>
    <div class="tray">
      <button class="chevron" aria-label="Показать значки"><svg class="icon small" viewBox="0 0 10 10"><path d="M7 1 3 5l4 4" fill="none" stroke="#ddd" stroke-width="1.300"/></svg></button>
      <div class="tray-icons"><svg class="icon"><use href="#net"/></svg><svg class="icon"><use href="#sound"/></svg></div>
      <div class="lang">РУС</div>
      <div class="clock">21:34<br>18.04.2025</div>
      <button class="notice" aria-label="Уведомления"><svg class="icon"><use href="#bubble"/></svg></button>
    </div>
  </nav>
</div>
</body>
</html>
```
FILE: styles.css
```css
* { box-sizing: border-box; }
body { margin: 0; background: #333; color: #d6d6d6; font: 5px/5px "Noto Sans", "Open Sans", sans-serif; }
button { display: flex; align-items: center; justify-content: center; margin: 0; padding: 0; border: 0; background: none; color: inherit; font: inherit; text-align: left; white-space: nowrap; }
ul { list-style: none; margin: 0; padding: 0; }
.sprite { position: absolute; width: 0; height: 0; }
.icon { display: block; flex: none; width: 8px; height: 8px; }
.icon.small { width: 6px; height: 6px; }
.icon.tiny { width: 5px; height: 5px; }
.icon.large { width: 11px; height: 11px; }

.screen { display: flex; height: 100vh; overflow: hidden; }
.app { flex: 1; min-width: 0; display: flex; flex-direction: column; }

.menubar { display: flex; align-items: center; height: 12px; background: #333; }
.logo { width: 10px; height: 10px; margin: 0 4px 0 1px; }
.menu { display: flex; gap: 6px; line-height: 8px; color: #f0f0f0; }
.window-tools { display: flex; align-items: center; gap: 4px; margin-left: auto; }
.search { display: flex; align-items: center; gap: 2px; width: 87px; height: 10px; padding: 0 0 0 3px; border: 1px solid #888; background: #555; color: #ccc; }
.search input { flex: 1; min-width: 0; height: 8px; padding: 0; border: 0; outline: 0; background: none; color: #ccc; font: inherit; }
.search input::placeholder { color: #b4b4b4; opacity: 1; }
.window-buttons { display: flex; gap: 8px; margin: 0 4px 0 6px; }

.tabs { display: flex; height: 11px; border-bottom: 2px solid #000; background: #505050; }
.home { width: 12px; }
.home-menu { width: 10px; color: #999; }
.tab { gap: 2px; padding: 0 3px 0 2px; background: #000; color: #ddd; }
.tab .small { margin-left: 2px; }

.ribbon { display: flex; height: 43px; border-bottom: 1px solid #222; background: #484848; }
.group { display: flex; flex-direction: column; justify-content: space-between; border-right: 1px solid #2b2b2b; }
.modes { width: 55px; }
.system { width: 36px; }
.basic { width: 109px; }
.solver { width: 164px; }
.extra { width: 109px; }
.rest { flex: 1; border: 0; }
.caption { display: flex; align-items: center; justify-content: center; height: 8px; background: #363636; color: #c4c4c4; }
.grip { background: linear-gradient(#888, #888) right 2px center / 1px 4px no-repeat #363636; }
.mode-list { display: grid; grid-auto-rows: 11px; }
.cmd { justify-content: flex-start; gap: 3px; min-width: 0; }
.cmd.active { background: #000; color: #eee; }
.cmd.off { color: #7c7c7c; }
.modes .cmd { gap: 2px; padding-left: 2px; }
.icon-grid { display: grid; grid-template-columns: repeat(3, 12px); grid-auto-rows: 11px; }
.commands { display: grid; grid-auto-rows: 11px; padding-left: 2px; }
.basic .commands { grid-template-columns: 54px 1fr; }
.solver .commands { grid-template-columns: 54px 54px 1fr; }
.extra .commands { grid-template-columns: 54px 1fr; }
.extra .cmd { gap: 2px; }

.workspace { flex: 1; min-height: 0; display: flex; }
.strip { display: flex; flex-direction: column; background: #333; }
.strip button { height: 11px; }
.strip .active { background: #000; }
.left { width: 12px; }
.right { width: 12px; border-left: 1px solid #222; }
.panel { display: flex; flex-direction: column; background: #484848; }
.tree-panel { width: 141px; border-right: 1px solid #333; }
.prop-panel { width: 141px; border-left: 1px solid #222; }
.panel-title { display: flex; align-items: center; justify-content: space-between; height: 8px; margin: 0; padding: 0 1px; background: #333; font: inherit; color: #ccc; }
.panel-body { flex: 1; min-height: 0; display: flex; justify-content: space-between; }
.scrollbar { flex: none; width: 4px; margin-top: 1px; background: #a3a3a3; }

.tree { padding: 4px 0 0 5px; }
.tree ul { margin-left: 9px; }
.tree ul ul { margin-bottom: 1px; }
.node { height: 8px; gap: 2px; }
.box { position: relative; flex: none; width: 4px; height: 4px; background: #ddd; }
.box.minus::before, .box.plus::before { content: ""; display: block; width: 2px; height: 1px; margin: 1px; background: #333; }
.box.plus::after { content: ""; position: absolute; left: 1px; top: 1px; width: 1px; height: 2px; background: #333; }
.box.none { background: linear-gradient(90deg, transparent 1px, #606060 1px) center / 100% 1px no-repeat; }
.box.dark { display: block; width: 5px; height: 5px; border: 1px solid #111; background: #444; }
.box.dark::before { margin: 1px 0; background: #999; }
.node.selected span { background: #eee; color: #111; line-height: 8px; }

.viewport { position: relative; flex: 1; min-width: 0; background: linear-gradient(#4c4c4c, #333); }
.scene { display: block; width: 100%; height: 100%; }
.axis { font-size: 6px; }
.ax { fill: #c8262c; }
.ay { fill: #129028; }
.az { fill: #2058ce; }
.viewbar { position: absolute; top: 0; right: 64px; display: flex; height: 12px; border: 1px solid #2b2b2b; border-top: 0; background: #444; color: #ddd; }
.viewbar button { width: 12px; border-right: 1px solid #383838; }
.viewbar .wide { width: 22px; gap: 3px; }
.viewbar .active { margin-right: 1px; background: #000; }
.handle { width: 8px; background: #222; }

.props { flex: 1; min-width: 0; display: flex; flex-direction: column; padding: 3px 6px 1px 1px; }
.prop-table { width: 100%; table-layout: fixed; border-collapse: collapse; }
.gutter { width: 9px; }
.name { width: 46px; }
.prop-table tr { height: 9px; }
.prop-table .tall { height: 10px; }
.prop-table th { padding: 0 1px; background: #333; text-align: left; font-weight: 700; white-space: nowrap; }
.prop-table td { padding: 0 2px; border: 1px solid #383838; border-width: 0 0 1px 1px; white-space: nowrap; overflow: hidden; color: #ccc; }
.prop-table .long { padding: 0 0 0 1px; }
.prop-table th i { margin: 0 1px; }
.blank { flex: 1; width: 65px; border-right: 1px solid #383838; }
.hint { height: 32px; border: 1px solid #666; background: #333; }

.taskbar { display: flex; flex-direction: column; width: 28px; background: #1e1e1e; }
.taskbar > button { height: 21px; border-right: 1px solid transparent; }
.taskbar .start { height: 18px; }
.taskbar .open { border-right-color: #777; }
.taskbar .current { height: 22px; background: #484848; }
.tray { display: flex; flex-direction: column; align-items: center; margin-top: auto; color: #eee; text-align: center; }
.chevron { width: 14px; height: 8px; align-self: flex-start; }
.tray-icons { display: flex; gap: 2px; margin-top: 3px; }
.lang { margin-top: 7px; font-size: 6px; }
.clock { margin-top: 11px; line-height: 8px; }
.notice { margin: 8px 0; }
```
